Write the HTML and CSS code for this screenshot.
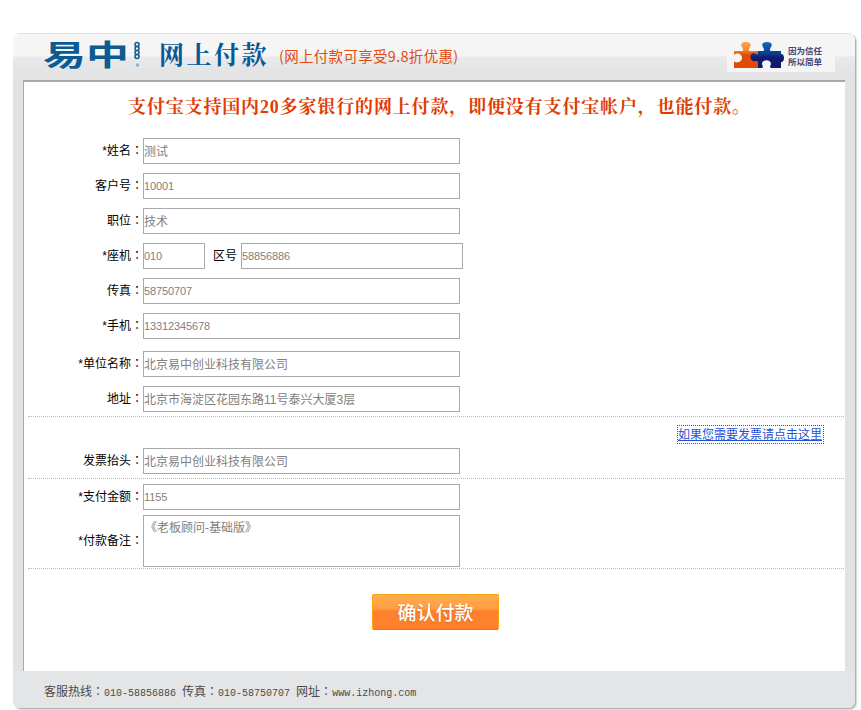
FILE: index.html
```html
<!DOCTYPE html>
<html lang="zh-CN">
<head>
<meta charset="utf-8">
<title>网上付款</title>
<link rel="stylesheet" href="styles.css">
</head>
<body>
<div class="panel">
  <header class="header">
    <svg class="logo" width="100" height="40" viewBox="0 0 100 40">
      <text class="logo-text" x="0" y="0" transform="translate(-1 33) scale(1.48 1)">易中</text>
      <g fill="none" stroke="#0a5a94" stroke-width="1.500">
        <circle cx="93" cy="11.500" r="2"/><circle cx="93" cy="15.500" r="2"/><circle cx="93" cy="19.500" r="2"/><circle cx="93" cy="23.500" r="2"/>
      </g>
      <circle cx="93.500" cy="32" r="1.700" fill="#8fb0cc"/>
    </svg>
    <h1 class="title">网上付款</h1>
    <span class="offer">(网上付款可享受9.8折优惠)</span>
    <div class="trust">
      <svg width="52" height="28" viewBox="0 0 52 28">
        <defs>
          <linearGradient id="orange" x2="0" y2="1"><stop offset="0" stop-color="#ffa64d"/><stop offset=".3" stop-color="#f58a35"/><stop offset=".5" stop-color="#e24c08"/><stop offset="1" stop-color="#e44a05"/></linearGradient>
          <linearGradient id="blue" x2="0" y2="1"><stop offset="0" stop-color="#1268b8"/><stop offset=".45" stop-color="#0a3c90"/><stop offset=".6" stop-color="#121b70"/><stop offset="1" stop-color="#101a6c"/></linearGradient>
        </defs>
        <path fill="url(#orange)" d="M1 10H9C11 10 10 8 9 6C7 3 9 1 13 1S19 3 17 6C16 8 15 10 17 10H25V27H1V20C3 23 9 21 9 17S4 11 1 14Z"/>
        <path fill="url(#blue)" d="M25 10H30C32 10 31 8 30 6C28 3 30 1 34 1S40 3 38 6C37 8 36 10 38 10H48V13C52 12 52 22 48 21V27H38C36 26 38 24 38 23C38 18 29 18 29 23C29 24 31 26 29 27H25V21C24 19 22 21 20 20C16 18 17 12 21 12C23 13 24 14 25 13Z"/>
      </svg>
      <div class="slogan">因为信任<br>所以简单</div>
    </div>
  </header>

  <main class="content">
    <h2 class="notice">支付宝支持国内20多家银行的网上付款，即便没有支付宝帐户，也能付款。</h2>
    <form class="form">
      <div class="row"><label>*姓名<span class="colon" lang="zh-TW">：</span></label><input value="测试"></div>
      <div class="row"><label>客户号<span class="colon" lang="zh-TW">：</span></label><input class="num" value="10001"></div>
      <div class="row"><label>职位<span class="colon" lang="zh-TW">：</span></label><input value="技术"></div>
      <div class="row"><label>*座机<span class="colon" lang="zh-TW">：</span></label><input class="num area" value="010"><span class="unit">区号</span><input class="num phone" value="58856886"></div>
      <div class="row"><label>传真<span class="colon" lang="zh-TW">：</span></label><input class="num" value="58750707"></div>
      <div class="row mobile"><label>*手机<span class="colon" lang="zh-TW">：</span></label><input class="num" value="13312345678"></div>
      <div class="row"><label>*单位名称<span class="colon" lang="zh-TW">：</span></label><input value="北京易中创业科技有限公司"></div>
      <div class="row address"><label>地址<span class="colon" lang="zh-TW">：</span></label><input value="北京市海淀区花园东路11号泰兴大厦3层"></div>
      <div class="invoice">
        <a class="invoice-link" href="#">如果您需要发票请点击这里</a>
        <div class="row"><label>发票抬头<span class="colon" lang="zh-TW">：</span></label><input value="北京易中创业科技有限公司"></div>
      </div>
      <div class="payment">
        <div class="row amount"><label>*支付金额<span class="colon" lang="zh-TW">：</span></label><input class="num" value="1155"></div>
        <div class="row memo"><label>*付款备注<span class="colon" lang="zh-TW">：</span></label><textarea>《老板顾问-基础版》</textarea></div>
      </div>
      <button class="submit" type="button">确认付款</button>
    </form>
  </main>

  <footer class="footer">客服热线<span class="colon" lang="zh-TW">：</span><span class="mono">010-58856886 </span>传真<span class="colon" lang="zh-TW">：</span><span class="mono">010-58750707 </span>网址<span class="colon" lang="zh-TW">：</span><span class="mono">www.izhong.com</span></footer>
</div>
</body>
</html>
```
FILE: styles.css
```css
* { box-sizing: border-box; }
body {
  margin: 0;
  height: 710px;
  overflow: hidden;
  background: #fff;
  color: #000;
  font: 12px/18px "Liberation Sans", "Noto Sans CJK SC", sans-serif;
}
.panel {
  width: 842px;
  height: 675px;
  margin: 33px 0 0 13px;
  padding: 0 10px;
  border-radius: 7px;
  background: linear-gradient(#dedfe0 0 1px, #f5f5f5 1px 23px, #e9eaeb 24px, #e4e5e7 34px, #e2e2e2 48px, #e2e2e2 638px, #e4e5e7 638px);
  box-shadow: 1px 1px 1px #a9adad, 2px 2px 2px #d5d8d8;
}
.header {
  height: 47px;
  padding-left: 21px;
  display: flex;
}
.logo { flex: none; overflow: visible; }
.logo-text {
  font: 700 29px "Noto Sans CJK SC", sans-serif;
  fill: #0a5a94;
}
.title {
  margin: 1px 0 0 15px;
  font: 700 25px/38px "Noto Serif CJK SC", "Noto Sans CJK SC", serif;
  letter-spacing: 2.500px;
  color: #075894;
  white-space: nowrap;
}
.offer {
  margin: 11px 0 0 10px;
  font: 14.500px/24px "Noto Sans CJK SC", sans-serif;
  letter-spacing: 0.300px;
  color: #e34b12;
  white-space: nowrap;
}
.trust {
  width: 108px;
  height: 37px;
  margin: 2px 10px 0 auto;
  padding: 6px 0 0 6px;
  display: flex;
  background: #f5f5f6;
}
.slogan {
  margin: 4px 0 0 3px;
  font: 700 8.500px/10.500px "Noto Sans CJK SC", sans-serif;
  color: #414675;
  white-space: nowrap;
}
.content {
  height: 591px;
  padding-left: 4px;
  background: #fff;
  border-top: 2px solid #a4aab1;
  border-left: 1px solid #a9a9ad;
}
.notice {
  margin: 0;
  padding: 11px 0 0 100px;
  height: 56px;
  font: 700 18px/28px "Liberation Serif", "Noto Serif CJK SC", "Noto Sans CJK SC", serif;
  letter-spacing: 0.850px;
  color: #e03c02;
  white-space: nowrap;
}
.form { width: 816px; }
.row {
  display: flex;
  align-items: center;
  height: 26px;
  margin-bottom: 9px;
}
label {
  width: 115px;
  flex: none;
  text-align: right;
  white-space: nowrap;
}
.colon { font-family: "Noto Sans CJK TC", sans-serif; line-height: 1; }
input, textarea {
  width: 317px;
  height: 26px;
  margin: 0;
  padding: 0 0 1px;
  border: 1px solid #a9a9a9;
  border-radius: 0;
  outline: 0;
  background: #fff;
  color: #808080;
  font: 12px/18px "Liberation Sans", "Noto Sans CJK SC", sans-serif;
}
.num { font-size: 11px; letter-spacing: -0.120px; }
.area { width: 62px; }
.unit { margin: 0 4px 0 8px; }
.phone { width: 222px; }
.mobile { margin-bottom: 12px; }
.address { margin-bottom: 4px; }
.invoice, .payment {
  border-top: 1px dotted #bbb;
}
.invoice {
  height: 62px;
  padding-top: 8px;
}
.invoice-link {
  display: block;
  width: 147px;
  height: 19px;
  margin: 0 20px 4px auto;
  border: 1px dotted #1f55c4;
  line-height: 18px;
  color: #1f50d8;
  text-decoration: underline;
  white-space: nowrap;
}
.payment {
  height: 91px;
  padding-top: 5px;
  border-bottom: 1px dotted #bbb;
}
.amount { margin-bottom: 5px; }
.memo { height: 52px; margin: 0; }
textarea {
  height: 52px;
  padding: 3px 1px;
  resize: none;
  overflow: hidden;
}
.submit {
  display: block;
  width: 127px;
  height: 36px;
  margin: 25px 0 0 344px;
  padding: 0;
  border: 1px solid #ffa20c;
  border-bottom-color: #f27016;
  border-radius: 2px;
  background: linear-gradient(#ffae50, #ff9c40 42%, #ff812d 46%, #ff812d);
  color: #fff;
  font: 500 19px/32px "Noto Sans CJK SC", sans-serif;
  text-shadow: 0 1px 2px #d86a20;
}
.footer {
  height: 37px;
  padding: 12px 0 0 21px;
  color: #4b4b4b;
  white-space: pre;
}
.mono { font: 10px/18px "Liberation Mono", monospace; }
```
